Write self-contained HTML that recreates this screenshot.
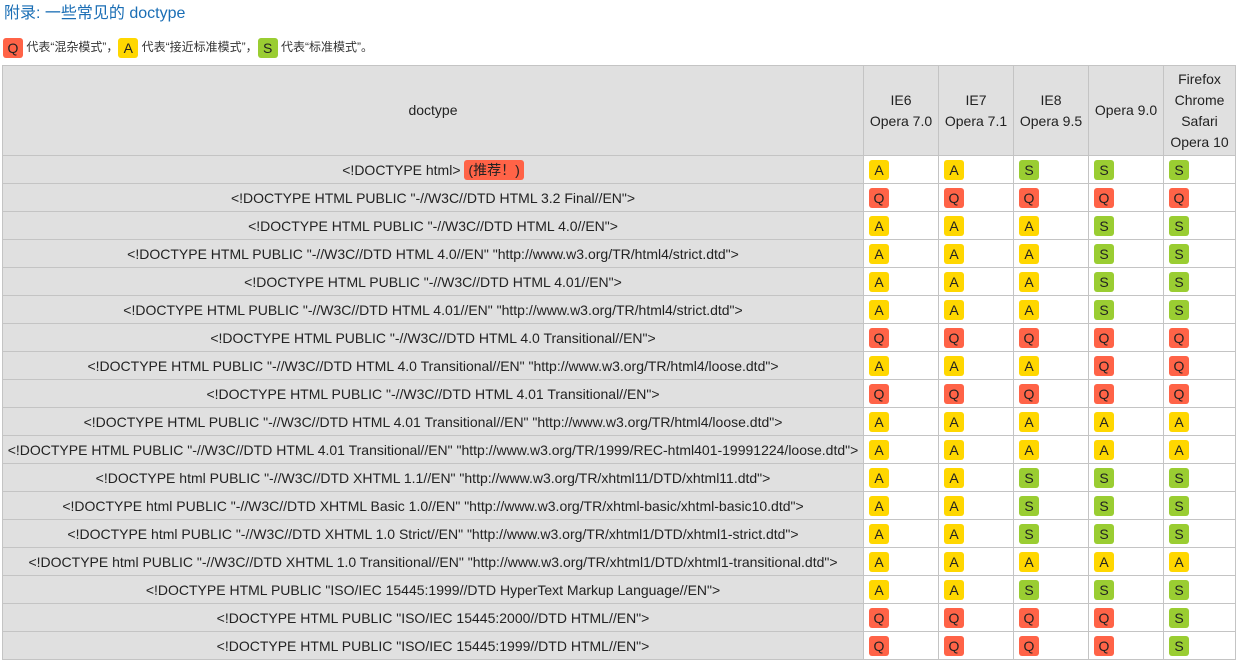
<!DOCTYPE html>
<html><head><meta charset="utf-8">
<style>
body{margin:0;background:#fff;font-family:"Liberation Sans","Noto Sans CJK SC",sans-serif;color:#222;}
h3{margin:0;position:absolute;left:4px;top:4px;font-size:16px;font-weight:normal;color:#1a6eb5;line-height:20px;}
.leg{position:absolute;left:3px;top:37px;font-size:12px;line-height:20px;color:#333;}
.b{display:inline-block;width:20px;height:20px;line-height:20px;text-align:center;border-radius:3px;font-size:14px;color:#222;vertical-align:middle;box-sizing:border-box;}
.Q{background:#ff6347}.A{background:#ffd700}.S{background:#9acd32}
table{position:absolute;left:2px;top:65px;border-collapse:collapse;table-layout:fixed;font-size:14px;}
td,th{border:1px solid #c4c4c4;padding:0;height:27px;}
th{background:#e0e0e0;font-weight:normal;height:89px;line-height:21px;}
td.d{background:#e0e0e0;text-align:center;}
td.c{padding-left:5px;background:#fff;}
.rec{display:inline-block;background:#ff6347;border-radius:3px;padding:0 4px;line-height:20px;}
</style></head><body>
<h3>附录: 一些常见的 doctype</h3>
<div class="leg"><span class="b Q">Q</span> 代表“混杂模式”，<span class="b A">A</span> 代表“接近标准模式”，<span class="b S">S</span> 代表“标准模式”。</div>
<table>
<colgroup><col style="width:861px"><col style="width:75px"><col style="width:75px"><col style="width:75px"><col style="width:75px"><col style="width:72px"></colgroup>
<tr style="height:90px"><th>doctype</th><th>IE6<br>Opera 7.0</th><th>IE7<br>Opera 7.1</th><th>IE8<br>Opera 9.5</th><th>Opera 9.0</th><th>Firefox<br>Chrome<br>Safari<br>Opera 10</th></tr>
<tr style="height:28px"><td class="d">&lt;!DOCTYPE html&gt; <span class="rec">(推荐！)</span></td><td class="c"><span class="b A">A</span></td><td class="c"><span class="b A">A</span></td><td class="c"><span class="b S">S</span></td><td class="c"><span class="b S">S</span></td><td class="c"><span class="b S">S</span></td></tr>
<tr style="height:28px"><td class="d">&lt;!DOCTYPE HTML PUBLIC "-//W3C//DTD HTML 3.2 Final//EN"&gt;</td><td class="c"><span class="b Q">Q</span></td><td class="c"><span class="b Q">Q</span></td><td class="c"><span class="b Q">Q</span></td><td class="c"><span class="b Q">Q</span></td><td class="c"><span class="b Q">Q</span></td></tr>
<tr style="height:28px"><td class="d">&lt;!DOCTYPE HTML PUBLIC "-//W3C//DTD HTML 4.0//EN"&gt;</td><td class="c"><span class="b A">A</span></td><td class="c"><span class="b A">A</span></td><td class="c"><span class="b A">A</span></td><td class="c"><span class="b S">S</span></td><td class="c"><span class="b S">S</span></td></tr>
<tr style="height:28px"><td class="d">&lt;!DOCTYPE HTML PUBLIC "-//W3C//DTD HTML 4.0//EN" "http://www.w3.org/TR/html4/strict.dtd"&gt;</td><td class="c"><span class="b A">A</span></td><td class="c"><span class="b A">A</span></td><td class="c"><span class="b A">A</span></td><td class="c"><span class="b S">S</span></td><td class="c"><span class="b S">S</span></td></tr>
<tr style="height:28px"><td class="d">&lt;!DOCTYPE HTML PUBLIC "-//W3C//DTD HTML 4.01//EN"&gt;</td><td class="c"><span class="b A">A</span></td><td class="c"><span class="b A">A</span></td><td class="c"><span class="b A">A</span></td><td class="c"><span class="b S">S</span></td><td class="c"><span class="b S">S</span></td></tr>
<tr style="height:28px"><td class="d">&lt;!DOCTYPE HTML PUBLIC "-//W3C//DTD HTML 4.01//EN" "http://www.w3.org/TR/html4/strict.dtd"&gt;</td><td class="c"><span class="b A">A</span></td><td class="c"><span class="b A">A</span></td><td class="c"><span class="b A">A</span></td><td class="c"><span class="b S">S</span></td><td class="c"><span class="b S">S</span></td></tr>
<tr style="height:28px"><td class="d">&lt;!DOCTYPE HTML PUBLIC "-//W3C//DTD HTML 4.0 Transitional//EN"&gt;</td><td class="c"><span class="b Q">Q</span></td><td class="c"><span class="b Q">Q</span></td><td class="c"><span class="b Q">Q</span></td><td class="c"><span class="b Q">Q</span></td><td class="c"><span class="b Q">Q</span></td></tr>
<tr style="height:28px"><td class="d">&lt;!DOCTYPE HTML PUBLIC "-//W3C//DTD HTML 4.0 Transitional//EN" "http://www.w3.org/TR/html4/loose.dtd"&gt;</td><td class="c"><span class="b A">A</span></td><td class="c"><span class="b A">A</span></td><td class="c"><span class="b A">A</span></td><td class="c"><span class="b Q">Q</span></td><td class="c"><span class="b Q">Q</span></td></tr>
<tr style="height:28px"><td class="d">&lt;!DOCTYPE HTML PUBLIC "-//W3C//DTD HTML 4.01 Transitional//EN"&gt;</td><td class="c"><span class="b Q">Q</span></td><td class="c"><span class="b Q">Q</span></td><td class="c"><span class="b Q">Q</span></td><td class="c"><span class="b Q">Q</span></td><td class="c"><span class="b Q">Q</span></td></tr>
<tr style="height:28px"><td class="d">&lt;!DOCTYPE HTML PUBLIC "-//W3C//DTD HTML 4.01 Transitional//EN" "http://www.w3.org/TR/html4/loose.dtd"&gt;</td><td class="c"><span class="b A">A</span></td><td class="c"><span class="b A">A</span></td><td class="c"><span class="b A">A</span></td><td class="c"><span class="b A">A</span></td><td class="c"><span class="b A">A</span></td></tr>
<tr style="height:28px"><td class="d">&lt;!DOCTYPE HTML PUBLIC "-//W3C//DTD HTML 4.01 Transitional//EN" "http://www.w3.org/TR/1999/REC-html401-19991224/loose.dtd"&gt;</td><td class="c"><span class="b A">A</span></td><td class="c"><span class="b A">A</span></td><td class="c"><span class="b A">A</span></td><td class="c"><span class="b A">A</span></td><td class="c"><span class="b A">A</span></td></tr>
<tr style="height:28px"><td class="d">&lt;!DOCTYPE html PUBLIC "-//W3C//DTD XHTML 1.1//EN" "http://www.w3.org/TR/xhtml11/DTD/xhtml11.dtd"&gt;</td><td class="c"><span class="b A">A</span></td><td class="c"><span class="b A">A</span></td><td class="c"><span class="b S">S</span></td><td class="c"><span class="b S">S</span></td><td class="c"><span class="b S">S</span></td></tr>
<tr style="height:28px"><td class="d">&lt;!DOCTYPE html PUBLIC "-//W3C//DTD XHTML Basic 1.0//EN" "http://www.w3.org/TR/xhtml-basic/xhtml-basic10.dtd"&gt;</td><td class="c"><span class="b A">A</span></td><td class="c"><span class="b A">A</span></td><td class="c"><span class="b S">S</span></td><td class="c"><span class="b S">S</span></td><td class="c"><span class="b S">S</span></td></tr>
<tr style="height:28px"><td class="d">&lt;!DOCTYPE html PUBLIC "-//W3C//DTD XHTML 1.0 Strict//EN" "http://www.w3.org/TR/xhtml1/DTD/xhtml1-strict.dtd"&gt;</td><td class="c"><span class="b A">A</span></td><td class="c"><span class="b A">A</span></td><td class="c"><span class="b S">S</span></td><td class="c"><span class="b S">S</span></td><td class="c"><span class="b S">S</span></td></tr>
<tr style="height:28px"><td class="d">&lt;!DOCTYPE html PUBLIC "-//W3C//DTD XHTML 1.0 Transitional//EN" "http://www.w3.org/TR/xhtml1/DTD/xhtml1-transitional.dtd"&gt;</td><td class="c"><span class="b A">A</span></td><td class="c"><span class="b A">A</span></td><td class="c"><span class="b A">A</span></td><td class="c"><span class="b A">A</span></td><td class="c"><span class="b A">A</span></td></tr>
<tr style="height:28px"><td class="d">&lt;!DOCTYPE HTML PUBLIC "ISO/IEC 15445:1999//DTD HyperText Markup Language//EN"&gt;</td><td class="c"><span class="b A">A</span></td><td class="c"><span class="b A">A</span></td><td class="c"><span class="b S">S</span></td><td class="c"><span class="b S">S</span></td><td class="c"><span class="b S">S</span></td></tr>
<tr style="height:28px"><td class="d">&lt;!DOCTYPE HTML PUBLIC "ISO/IEC 15445:2000//DTD HTML//EN"&gt;</td><td class="c"><span class="b Q">Q</span></td><td class="c"><span class="b Q">Q</span></td><td class="c"><span class="b Q">Q</span></td><td class="c"><span class="b Q">Q</span></td><td class="c"><span class="b S">S</span></td></tr>
<tr style="height:28px"><td class="d">&lt;!DOCTYPE HTML PUBLIC "ISO/IEC 15445:1999//DTD HTML//EN"&gt;</td><td class="c"><span class="b Q">Q</span></td><td class="c"><span class="b Q">Q</span></td><td class="c"><span class="b Q">Q</span></td><td class="c"><span class="b Q">Q</span></td><td class="c"><span class="b S">S</span></td></tr>
</table>
</body></html>
